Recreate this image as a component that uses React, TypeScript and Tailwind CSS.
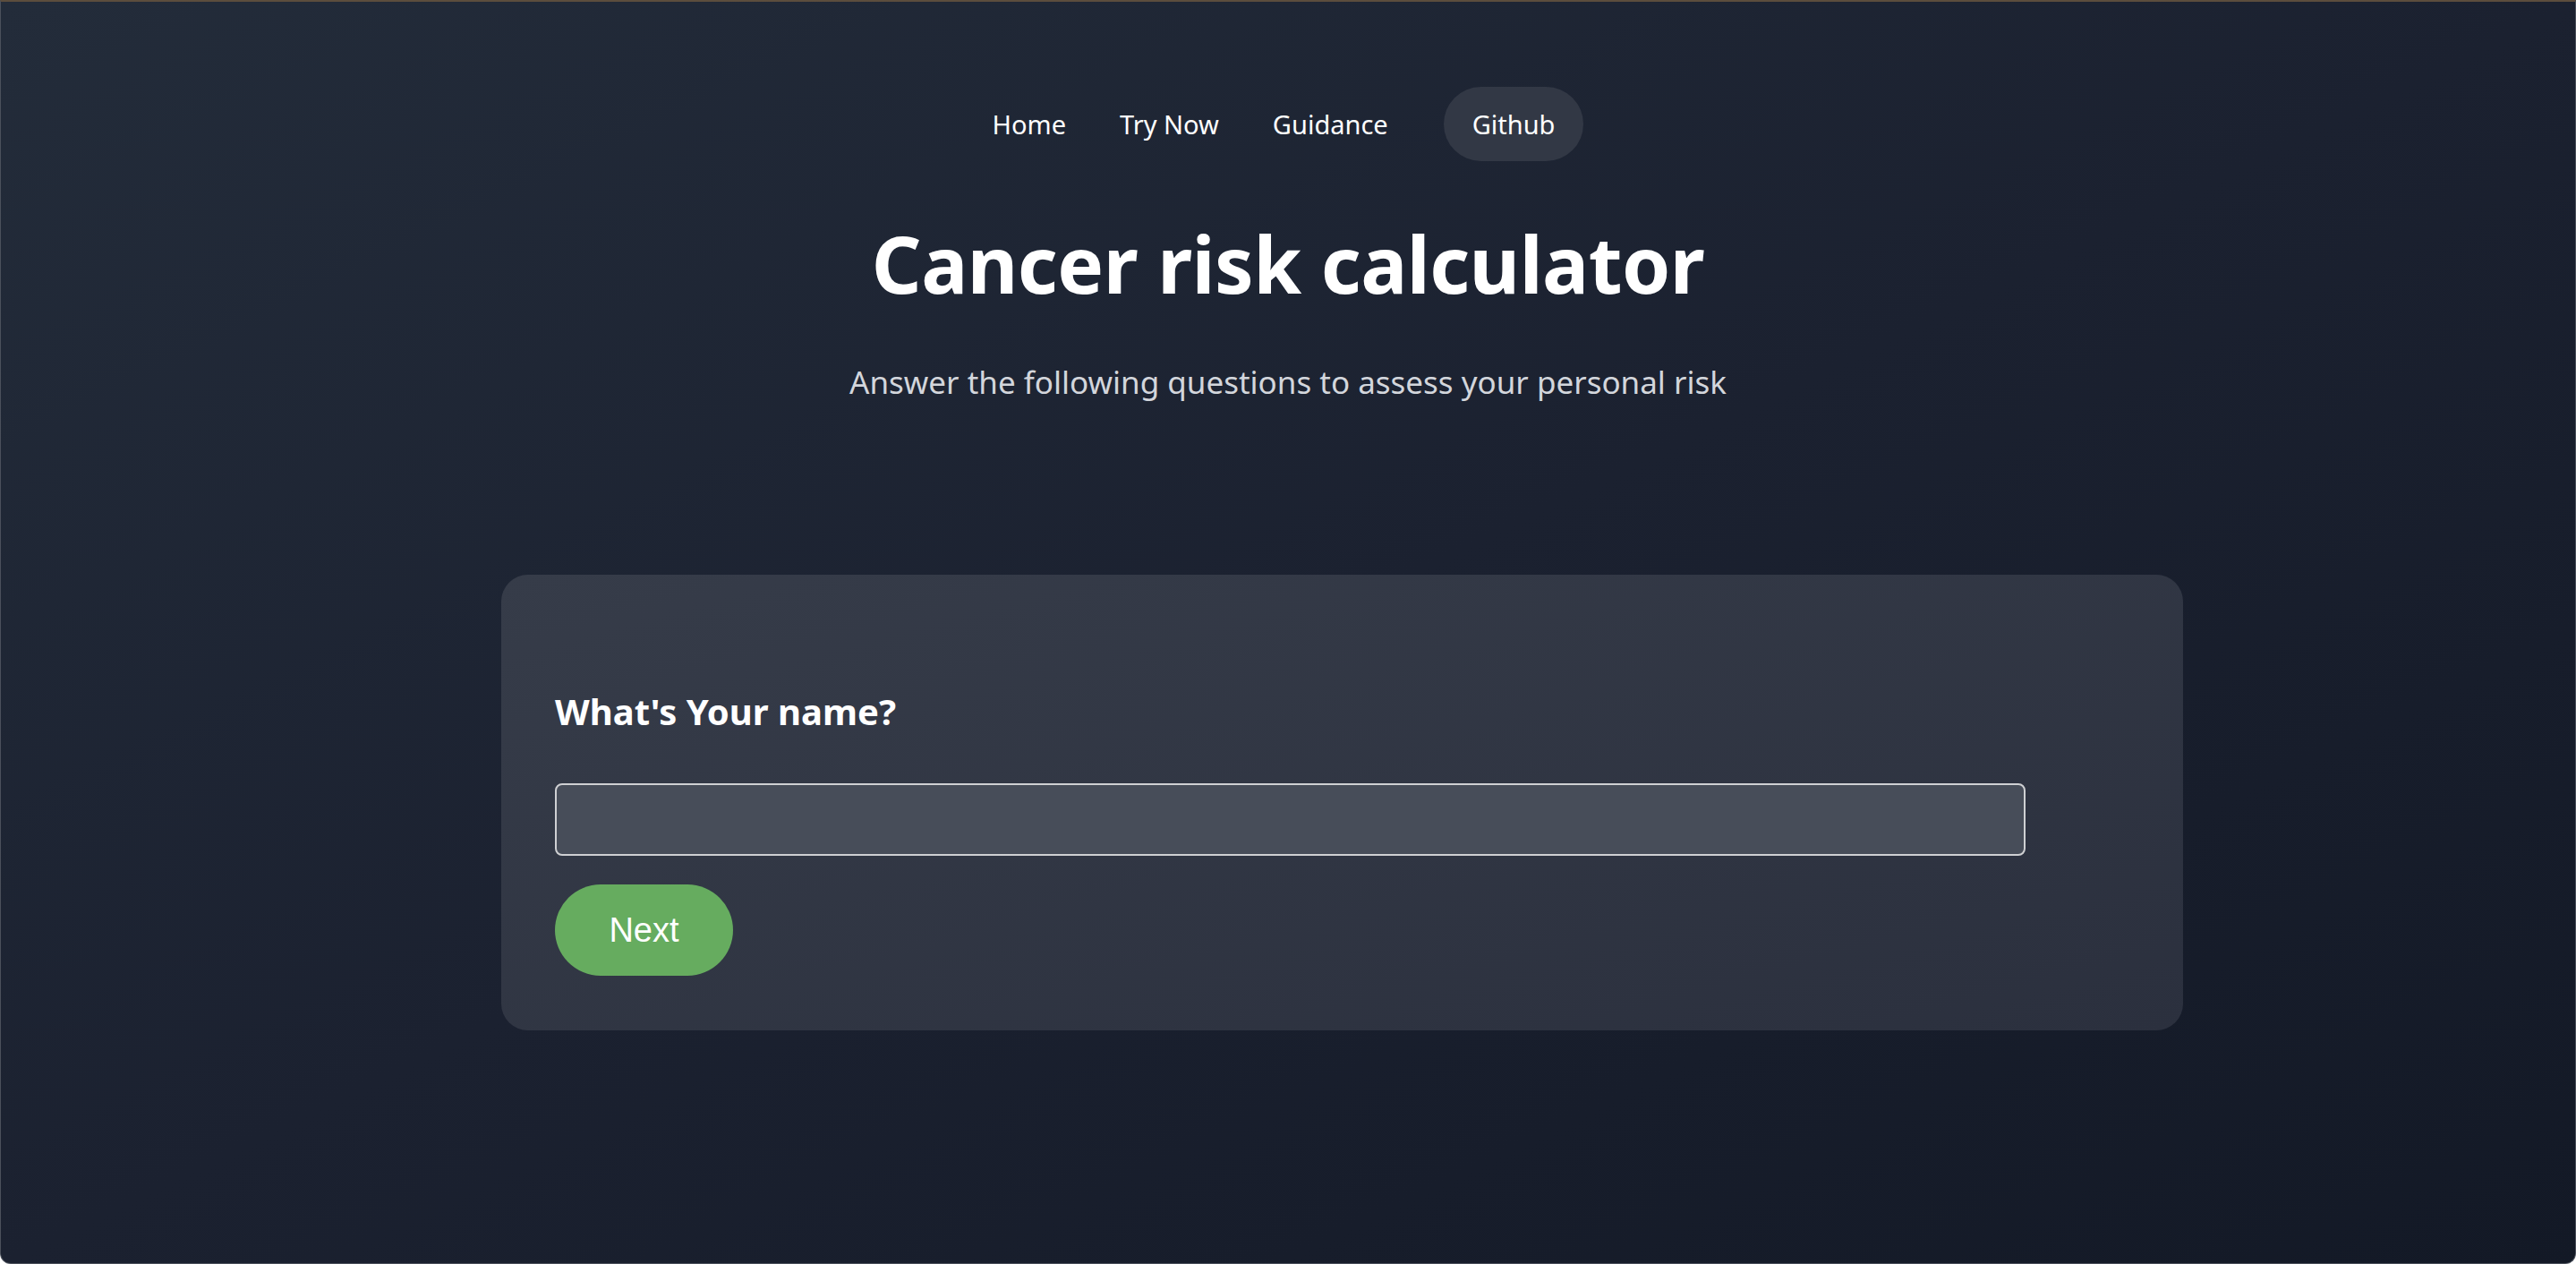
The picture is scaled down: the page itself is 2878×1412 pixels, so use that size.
export default function App() {
  const links = ['Home', 'Try Now', 'Guidance']

  return (
    <main
      className="h-[1412px] overflow-hidden rounded-b-[12px] border border-t-2 border-[#4b505b] border-t-[#5c4d3d] bg-linear-to-br from-[#232c3a] via-[#1b2130] to-[#131926] text-white"
      style={{ fontFamily: '"Noto Sans", "Open Sans", sans-serif' }}
    >
      <nav className="flex items-center justify-center pr-[30px] pt-[95px]">
        {links.map((l) => (
          <a key={l} className="px-[30px] text-[29px] leading-none text-white">
            {l}
          </a>
        ))}
        <a className="ml-[32px] flex h-[83px] items-center rounded-full bg-[#323845] px-[32px] text-[29px] leading-none text-white">
          Github
        </a>
      </nav>

      <h1 className="mt-[71px] text-center text-[87px] font-bold leading-none tracking-[-0.5px] text-white">
        Cancer risk calculator
      </h1>
      <p className="mt-[71px] text-center text-[35px] leading-none text-[#d3d6dc]">
        Answer the following questions to assess your personal risk
      </p>

      <section className="ml-[559px] mt-[198px] w-[1879px] rounded-[30px] bg-linear-to-br from-[#363c49] to-[#2b303e] px-[60px] pb-[61px] pt-[133px]">
        <h2 className="text-[40px] font-bold leading-none text-white">What's Your name?</h2>
        <input
          type="text"
          className="mt-[60px] block h-[81px] w-[1643px] rounded-[8px] border-2 border-[#cfd0d3] bg-[#474d59] px-4 text-[30px] text-white outline-none"
        />
        <button
          className="mt-[32px] flex h-[102px] w-[199px] items-center justify-center rounded-full bg-[#66ac5f] text-[38px] text-white"
          style={{ fontFamily: '"Liberation Sans", Arial, sans-serif' }}
        >
          Next
        </button>
      </section>
    </main>
  )
}
